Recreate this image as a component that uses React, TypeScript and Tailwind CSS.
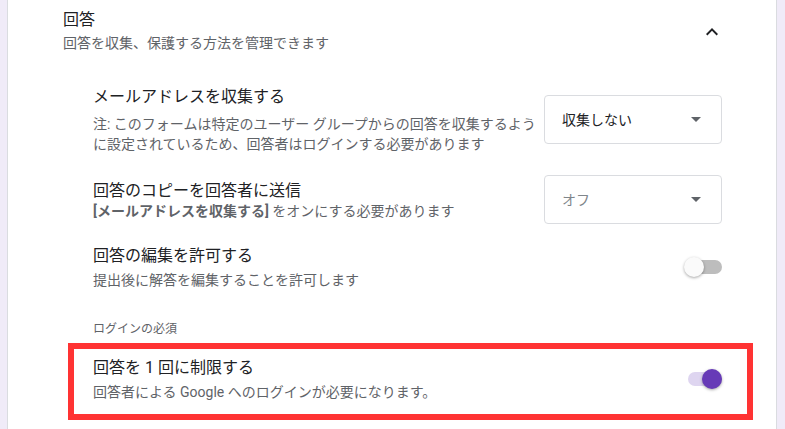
const font = "font-['Roboto','Noto_Sans_CJK_JP',sans-serif]";

function Caret() {
  return (
    <svg width="10" height="5" viewBox="0 0 10 5" className="shrink-0">
      <path d="M0 0l5 5 5-5z" fill="#5f6368" />
    </svg>
  );
}

function Select({ value, muted }: { value: string; muted?: boolean }) {
  return (
    <div className="w-[178px] h-[49px] shrink-0 border border-[#dadce0] rounded-[4px] flex items-center justify-between pl-[17px] pr-[20px]">
      <span className={`text-sm leading-5 ${muted ? "text-[#80868b]" : "text-[#202124]"}`}>{value}</span>
      <Caret />
    </div>
  );
}

function Toggle({ on }: { on?: boolean }) {
  return (
    <div className="relative w-[38px] h-[20px] shrink-0">
      <div
        className={`absolute right-0 top-[3px] w-[34px] h-[14px] rounded-full ${
          on ? "bg-[#ded5f0]" : "bg-[#bdbdbd]"
        }`}
      />
      <div
        className={`absolute top-0 w-[20px] h-[20px] rounded-full shadow-[0_1px_3px_rgba(0,0,0,0.35)] ${
          on ? "right-0 bg-[#673ab7]" : "left-0 bg-[#fafafa]"
        }`}
      />
    </div>
  );
}

export default function App() {
  return (
    <div className={`flex w-[785px] h-[429px] overflow-hidden bg-[#f0ebf8] ${font}`}>
      <div className="w-[7px] shrink-0" />
      <div className="w-[770px] shrink-0 bg-white border-x border-[#dadce0] pl-[55px] pr-[52px] pt-2">
        {/* section header */}
        <div className="flex items-center justify-between">
          <div>
            <div className="text-base leading-6 text-[#202124]">回答</div>
            <div className="text-sm leading-[22px] text-[#5f6368]">回答を収集、保護する方法を管理できます</div>
          </div>
          <svg width="24" height="24" viewBox="0 0 24 24" className="mt-[2px]">
            <path d="M12 8l-6 6 1.41 1.41L12 10.83l4.59 4.58L18 14z" fill="#202124" />
          </svg>
        </div>

        <div className="pl-[30px] pr-[2px]">
          <div className="mt-[31px] flex items-center">
            <div className="flex-1 pr-1">
              <div className="text-base leading-6 text-[#202124]">メールアドレスを収集する</div>
              <div className="mt-[5px] text-sm leading-5 text-[#5f6368]">
                注: このフォームは特定のユーザー グループからの回答を収集するように設定されているため、回答者はログインする必要があります
              </div>
            </div>
            <Select value="収集しない" />
          </div>

          <div className="mt-[21px] flex items-center">
            <div className="flex-1 pr-1">
              <div className="text-base leading-6 text-[#202124]">回答のコピーを回答者に送信</div>
              <div className="-mt-[2px] text-sm leading-5 text-[#5f6368]">
                <span className="font-bold">[メールアドレスを収集する]</span> をオンにする必要があります
              </div>
            </div>
            <Select value="オフ" muted />
          </div>

          <div className="mt-[20px] flex items-center">
            <div className="flex-1">
              <div className="text-base leading-6 text-[#202124]">回答の編集を許可する</div>
              <div className="mt-[2px] text-sm leading-5 text-[#5f6368]">提出後に解答を編集することを許可します</div>
            </div>
            <Toggle />
          </div>

          <div className="mt-[31px] text-xs leading-4 text-[#5f6368]">ログインの必須</div>

          <div className="mt-[6px] -ml-[25px] -mr-[31px] border-[6px] border-[#ff3333] pl-[19px] pr-[25px] pt-[7px] pb-[12px] flex items-center">
            <div className="flex-1">
              <div className="text-base leading-6 text-[#202124]">回答を 1 回に制限する</div>
              <div className="mt-[2px] text-sm leading-5 text-[#5f6368]">回答者による Google へのログインが必要になります。</div>
            </div>
            <Toggle on />
          </div>
        </div>
      </div>
    </div>
  );
}
